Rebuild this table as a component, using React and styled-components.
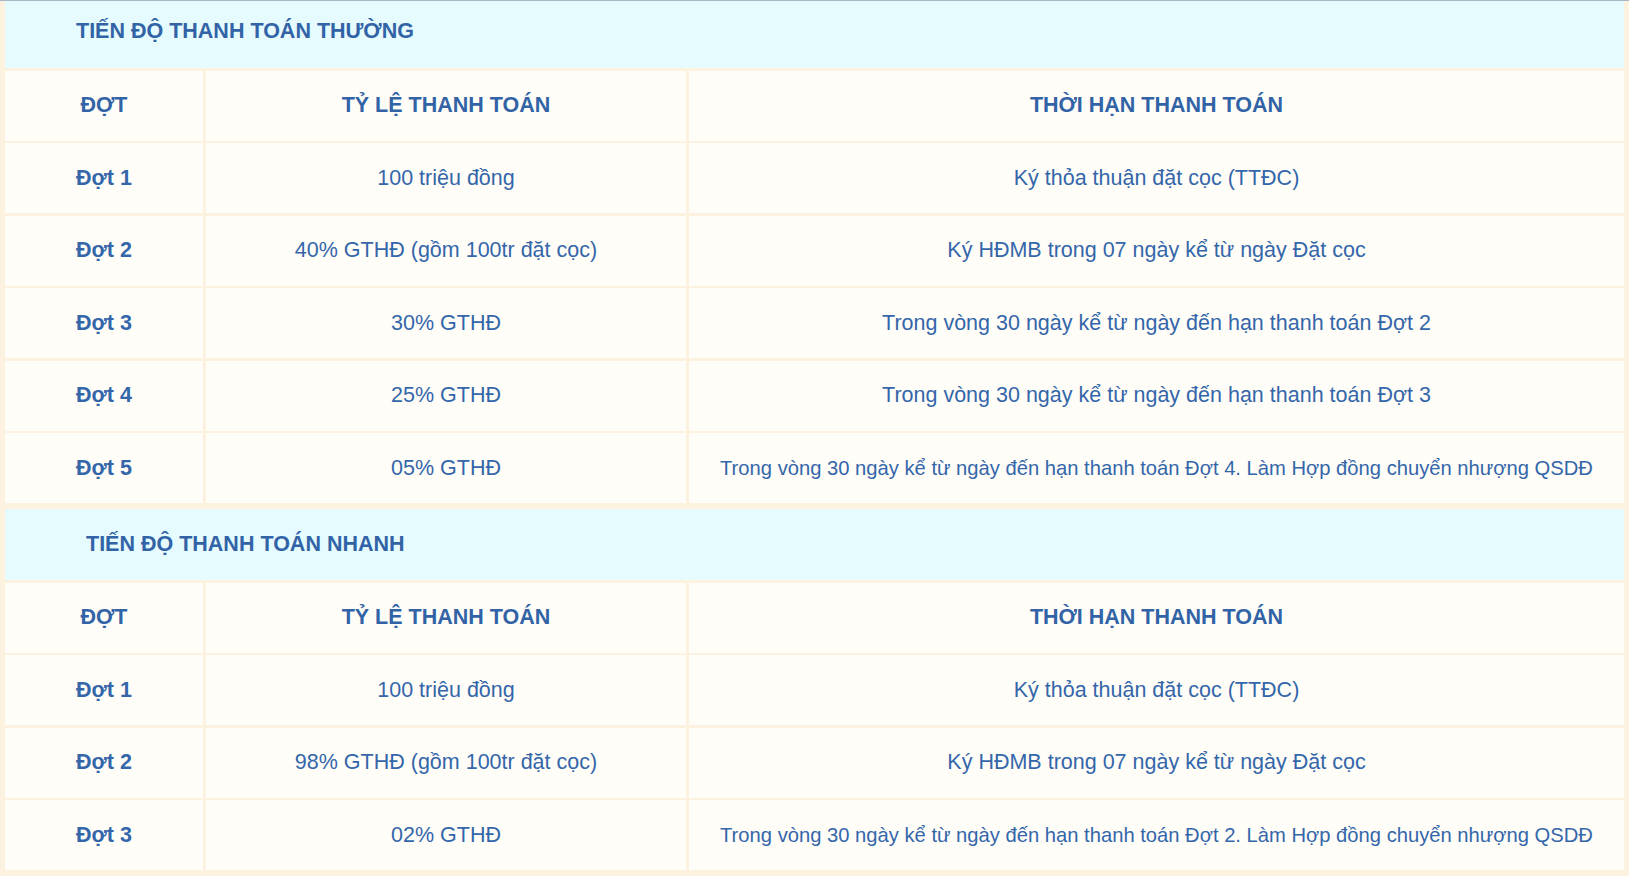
import styled, { createGlobalStyle } from "styled-components";

const GlobalStyle = createGlobalStyle`
  html, body {
    margin: 0;
    padding: 0;
    background: #fdf2df;
  }
  body {
    font-family: "Liberation Sans", Arial, sans-serif;
  }
`;

const schedules = [
  {
    title: "TIẾN ĐỘ THANH TOÁN THƯỜNG",
    indent: 71,
    first: true,
    rows: [
      ["Đợt 1", "100 triệu đồng", "Ký thỏa thuận đặt cọc (TTĐC)"],
      ["Đợt 2", "40% GTHĐ (gồm 100tr đặt cọc)", "Ký HĐMB trong 07 ngày kể từ ngày Đặt cọc"],
      ["Đợt 3", "30% GTHĐ", "Trong vòng 30 ngày kể từ ngày đến hạn thanh toán Đợt 2"],
      ["Đợt 4", "25% GTHĐ", "Trong vòng 30 ngày kể từ ngày đến hạn thanh toán Đợt 3"],
      ["Đợt 5", "05% GTHĐ", "Trong vòng 30 ngày kể từ ngày đến hạn thanh toán Đợt 4. Làm Hợp đồng chuyển nhượng QSDĐ", true],
    ],
  },
  {
    title: "TIẾN ĐỘ THANH TOÁN NHANH",
    indent: 81,
    first: false,
    rows: [
      ["Đợt 1", "100 triệu đồng", "Ký thỏa thuận đặt cọc (TTĐC)"],
      ["Đợt 2", "98% GTHĐ (gồm 100tr đặt cọc)", "Ký HĐMB trong 07 ngày kể từ ngày Đặt cọc"],
      ["Đợt 3", "02% GTHĐ", "Trong vòng 30 ngày kể từ ngày đến hạn thanh toán Đợt 2. Làm Hợp đồng chuyển nhượng QSDĐ", true],
    ],
  },
];

function App() {
  return (
    <Page>
      <GlobalStyle />
      <TopLine />
      <Content>
        {schedules.map((s) => (
          <Table key={s.title}>
            <Title $indent={s.indent} $first={s.first}>{s.title}</Title>
            <HeadCell>ĐỢT</HeadCell>
            <HeadCell>TỶ LỆ THANH TOÁN</HeadCell>
            <HeadCell>THỜI HẠN THANH TOÁN</HeadCell>
            {s.rows.map((r) => (
              <Row key={r[0]}>
                <Cell $bold>{r[0]}</Cell>
                <Cell>{r[1]}</Cell>
                <Cell $small={r[3]}>{r[2]}</Cell>
              </Row>
            ))}
          </Table>
        ))}
      </Content>
    </Page>
  );
}
export default App;

const Page = styled.div`
  width: 100%;
  min-height: 876px;
  background: #fdf2df;
`;

const TopLine = styled.div`
  height: 1px;
  background: #a9b6c6;
`;

const Content = styled.div`
  padding: 0 5px 6px 5px;
  display: flex;
  flex-direction: column;
  gap: 6px;
`;

const Table = styled.div`
  display: grid;
  grid-template-columns: 198px 480px 1fr;
  gap: 2.5px 3px;
`;

const Row = styled.div`
  display: contents;
`;

const Title = styled.div`
  grid-column: 1 / -1;
  height: ${(p) => (p.$first ? "67px" : "71px")};
  box-sizing: border-box;
  padding-left: ${(p) => p.$indent}px;
  padding-bottom: ${(p) => (p.$first ? "7px" : "0")};
  display: flex;
  align-items: center;
  background: #e5fbfe;
  color: #3163a6;
  font-size: 21.5px;
  font-weight: 700;
`;

const HeadCell = styled.div`
  height: 70px;
  display: flex;
  align-items: center;
  justify-content: center;
  background: #fffdf8;
  color: #3163a6;
  font-size: 21.5px;
  font-weight: 700;
`;

const Cell = styled.div`
  height: 70px;
  display: flex;
  align-items: center;
  justify-content: center;
  text-align: center;
  background: #fffdf8;
  color: #3466aa;
  font-size: ${(p) => (p.$small ? "20.2px" : "21.5px")};
  font-weight: ${(p) => (p.$bold ? 700 : 400)};
`;
